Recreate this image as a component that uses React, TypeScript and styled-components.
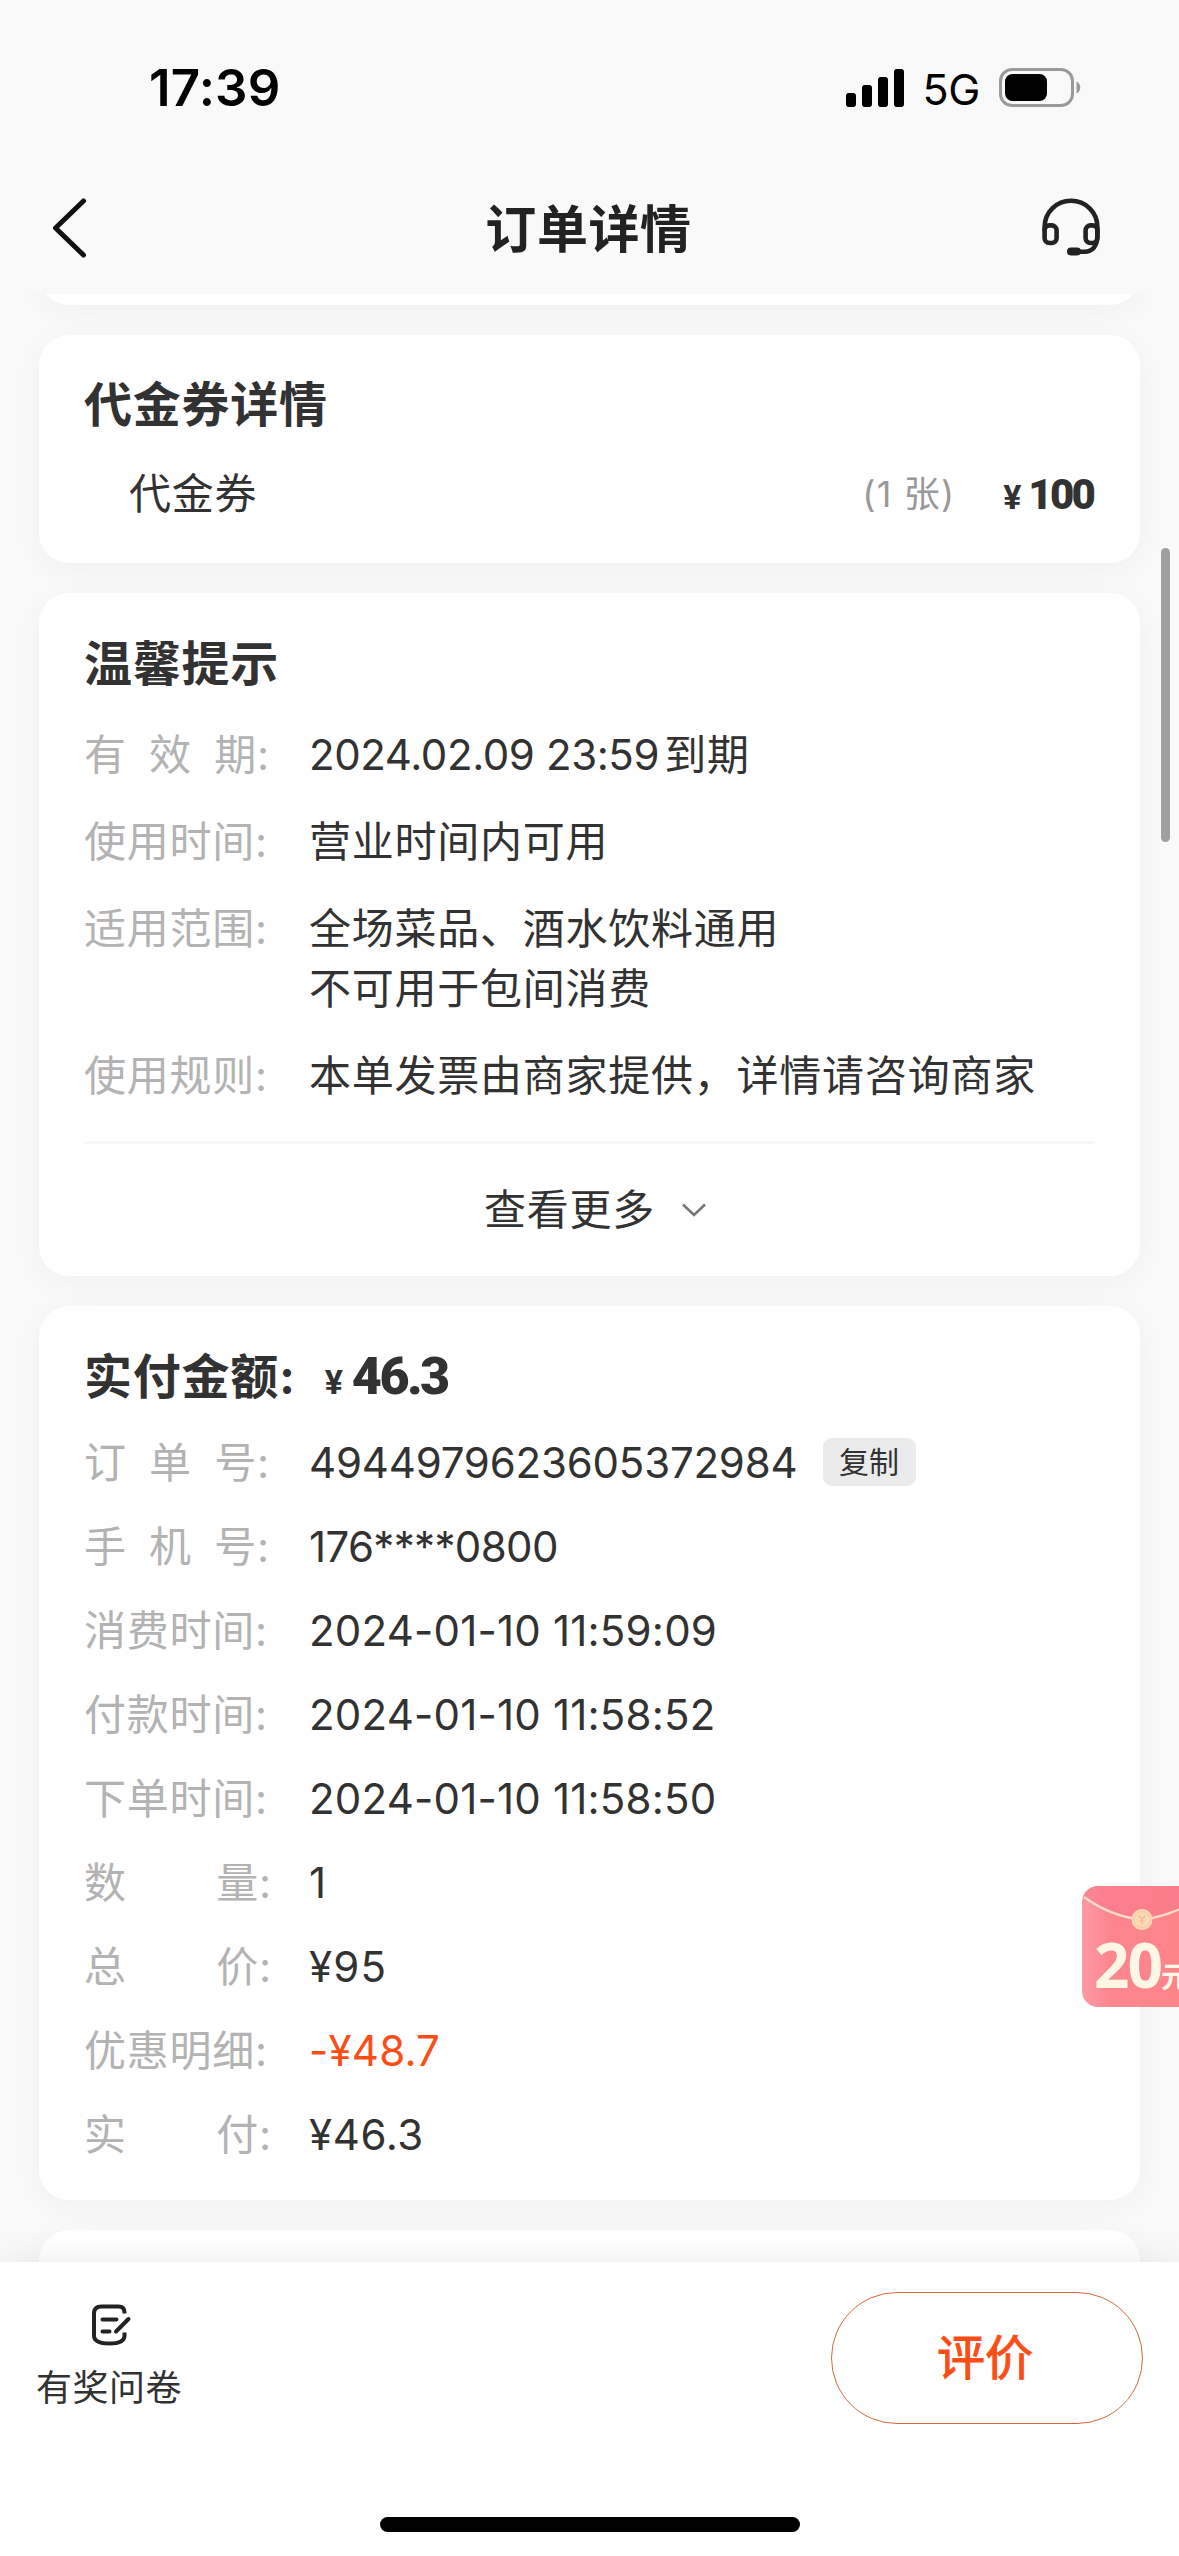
import React from "react";
import styled, { createGlobalStyle, css } from "styled-components";

const flex = (JC: string, AI: string, direction?: string) => `
display:flex;
flex-direction:${direction || "row"};
justify-content:${JC};
align-items:${AI};
`;
const TEXT = "#323232";
const LABEL = "#b3b3b3";
const ORANGE = "#fb4e16";

type Row = {
  label: string;
  value: string[];
  copy?: boolean;
  accent?: boolean;
  spacing?: number;
};

const tips: Row[] = [
  { label: "有效期", value: ["2024.02.09 23:59", "到期"], spacing: -0.4 },
  { label: "使用时间", value: ["营业时间内可用"] },
  { label: "适用范围", value: ["全场菜品、酒水饮料通用\n不可用于包间消费"] },
  { label: "使用规则", value: ["本单发票由商家提供，详情请咨询商家"] },
];

const order: Row[] = [
  { label: "订单号", value: ["4944979623605372984"], copy: true, spacing: -0.2 },
  { label: "手机号", value: ["176****0800"], spacing: -0.65 },
  { label: "消费时间", value: ["2024-01-10 11:59:09"] },
  { label: "付款时间", value: ["2024-01-10 11:58:52"] },
  { label: "下单时间", value: ["2024-01-10 11:58:50"] },
  { label: "数量", value: ["1"] },
  { label: "总价", value: ["¥95"], spacing: 1.2 },
  { label: "优惠明细", value: ["-¥48.7"], accent: true },
  { label: "实付", value: ["¥46.3"], spacing: 0.6 },
];

function Rows({ items, gap }: { items: Row[]; gap: number }) {
  return (
    <List $gap={gap}>
      {items.map((row) => (
        <Line key={row.label}>
          <Label>
            <Word $count={row.label.length}>
              {row.label.split("").map((c, i) => (
                <span key={i}>{c}</span>
              ))}
            </Word>
            :
          </Label>
          <Value $accent={row.accent}>
            {row.value.map((v) =>
              /^[\x20-\x7e¥]+$/.test(v) ? (
                <Latin
                  key={v}
                  $spacing={row.spacing}
                  $mixed={row.value.length > 1}
                >
                  {v}
                </Latin>
              ) : (
                v
              )
            )}
          </Value>
          {row.copy && <CopyButton>复制</CopyButton>}
        </Line>
      ))}
    </List>
  );
}

export default function App() {
  return (
    <Page>
      <GlobalStyle />
      <StatusBar>
        <Clock>17:39</Clock>
        <Signals>
          <svg width="58" height="38" viewBox="0 0 58 38">
            <rect x="0" y="24" width="10" height="14" rx="3" />
            <rect x="16" y="16" width="10" height="22" rx="3" />
            <rect x="32" y="8" width="10" height="30" rx="3" />
            <rect x="48" y="0" width="10" height="38" rx="3" />
          </svg>
          <Network>5G</Network>
          <svg width="82" height="40" viewBox="0 0 82 40">
            <rect
              x="1.5"
              y="1.5"
              width="72"
              height="36"
              rx="11.5"
              fill="none"
              stroke="#9a9a9a"
              strokeWidth="3"
            />
            <rect x="6" y="6" width="42" height="27" rx="7.5" />
            <path d="M77.500 13.500c5 2 5 10 0 12z" fill="#9a9a9a" />
          </svg>
        </Signals>
      </StatusBar>

      <NavBar>
        <svg width="36" height="62" viewBox="0 0 36 62">
          <path
            d="M32.5 4L4.5 31l28 27"
            fill="none"
            stroke="#111"
            strokeWidth="5"
            strokeLinecap="round"
            strokeLinejoin="round"
          />
        </svg>
        <NavTitle>订单详情</NavTitle>
        <svg width="60" height="60" viewBox="0 0 60 60">
          <g
            fill="none"
            stroke="#222"
            strokeWidth="4.6"
            strokeLinecap="round"
            strokeLinejoin="round"
          >
            <path d="M3.6 32V29C3.6 14 15.5 2.8 30 2.8S56.4 14 56.4 29v8c0 11-5 16.8-13 16.8H32" />
            <rect x="3.6" y="27.4" width="12" height="17.6" rx="5" />
            <rect x="44.6" y="27.4" width="11.8" height="17.6" rx="5" />
            <path d="M30 53.4h6" strokeWidth="8" />
          </g>
        </svg>
      </NavBar>

      <Content>
        <Card $tail="top" />

        <Card $pad="40px 45px 39px">
          <Title $bottom={29}>代金券详情</Title>
          <Voucher>
            <VoucherName>代金券</VoucherName>
            <Count>(1 张)</Count>
            <Price>
              <i>¥</i>
              <b>100</b>
            </Price>
          </Voucher>
        </Card>

        <Card $pad="41px 45px 0">
          <Title $bottom={31}>温馨提示</Title>
          <Rows items={tips} gap={27} />
          <More>
            查看更多
            <svg width="26" height="14" viewBox="0 0 26 14">
              <path
                d="M2 1.5l11 10.5 11-10.5"
                fill="none"
                stroke="#777"
                strokeWidth="2.6"
              />
            </svg>
          </More>
        </Card>

        <Card $pad="41px 45px 35px">
          <Title $bottom={26}>
            实付金额:
            <Price $large>
              <i>¥</i>
              <b>46.3</b>
            </Price>
          </Title>
          <Rows items={order} gap={24} />
        </Card>

        <Card $tail="bottom" />
      </Content>

      <Footer>
        <Actions>
          <Survey>
            <svg width="42" height="44" viewBox="0 0 42 44">
              <g
                fill="none"
                stroke="#222"
                strokeWidth="4"
                strokeLinecap="round"
                strokeLinejoin="round"
              >
                <path
                  d="M33.5 9.5V8.5c0-4-2-6-6-6h-17c-5 0-7.500 2.500-7.500 7v22c0 6 6 8 15.500 8s15-2 15-8v-3"
                  strokeLinecap="butt"
                />
                <path d="M11.500 15.500h14M11.500 27.500h7M25 27.500l12.500-12.500" />
              </g>
            </svg>
            有奖问卷
          </Survey>
          <ReviewButton>评价</ReviewButton>
        </Actions>
        <HomeBar />
      </Footer>

      <ScrollThumb />
      <Coupon>
        <svg width="97" height="60" viewBox="0 0 97 60">
          <path
            d="M0 10c18 13 38 21 59 24 15-2 27-6 38-11V0H12Q2 0 0 10z"
            fill="#f9798c"
            opacity="0.55"
          />
          <path
            d="M2 11c18 13 38 20.500 57 22.500 14-1 26-5 38-10"
            fill="none"
            stroke="#fbdcc8"
            strokeWidth="2.400"
          />
          <circle cx="60" cy="33.500" r="10.500" fill="#fbd9b6" />
          <circle
            cx="60"
            cy="33.500"
            r="8"
            fill="none"
            stroke="#f6c79f"
            strokeWidth="1"
          />
          <path
            d="M56.500 29.500l3.500 4 3.500-4M60 33.500v5M57 35h6"
            fill="none"
            stroke="#f3bb90"
            strokeWidth="1.200"
          />
        </svg>
        <CouponText>
          20<small>元</small>
        </CouponText>
      </Coupon>
    </Page>
  );
}

const GlobalStyle = createGlobalStyle`
  * {
    box-sizing: border-box;
  }
  body {
    margin: 0;
    background: #f9f9f9;
  }
  button {
    font: inherit;
    letter-spacing: inherit;
    padding: 0;
    border: none;
  }
  svg {
    display: block;
    flex-shrink: 0;
  }
`;
const Page = styled.div`
  ${flex("flex-start", "stretch", "column")}
  position: relative;
  width: 1179px;
  height: 2556px;
  overflow: hidden;
  background: #f9f9f9;
  color: ${TEXT};
  font-family: Inter, "Noto Sans CJK SC", sans-serif;
  font-size: 42px;
  line-height: 60px;
  letter-spacing: 0.76px;
  white-space: nowrap;
`;
const StatusBar = styled.div`
  ${flex("space-between", "center")}
  height: 176px;
  padding: 0 98px 0 149px;
  color: #000;
`;
const Clock = styled.div`
  font-size: 51px;
  font-weight: 600;
  letter-spacing: 0.2px;
`;
const Signals = styled.div`
  ${flex("flex-start", "center")}
`;
const Network = styled.div`
  font-size: 43px;
  letter-spacing: -0.4px;
  margin: 2px 19px 0 19px;
`;
const NavBar = styled.div`
  ${flex("space-between", "center")}
  height: 118px;
  padding: 0 78px 14px 51px;
  /* the side icons differ in width, keep the title on the page centre */
  svg:first-child {
    margin-right: 49px;
  }
`;
const NavTitle = styled.h1`
  margin: 3px 0 0;
  color: #222;
  font-size: 51px;
  font-weight: 700;
  letter-spacing: 0.6px;
`;
const Content = styled.div`
  ${flex("flex-start", "stretch", "column")}
  gap: 30px;
  height: 1968px;
  flex-shrink: 0;
  padding: 0 39px;
  overflow: hidden;
`;
const Card = styled.section<{ $pad?: string; $tail?: "top" | "bottom" }>`
  flex-shrink: 0;
  padding: ${({ $pad }) => $pad || 0};
  background: #fff;
  border-radius: 30px;
  box-shadow: 0 6px 30px rgba(0, 0, 0, 0.035);
  ${({ $tail }) =>
    $tail &&
    css`
      height: 120px;
      margin-top: ${$tail === "top" ? "-109px" : 0};
    `}
`;
const Title = styled.h2<{ $bottom: number }>`
  ${flex("flex-start", "center")}
  height: 60px;
  margin: 0 0 ${({ $bottom }) => $bottom}px;
  font-size: 48px;
  font-weight: 700;
`;
const Voucher = styled.div`
  ${flex("flex-start", "center")}
  height: 60px;
  padding: 0 2px 0 45px;
`;
const VoucherName = styled.div`
  flex: 1;
`;
const Count = styled.div`
  color: #999;
  font-size: 36px;
  letter-spacing: 1.2px;
`;
const Price = styled.div<{ $large?: boolean }>`
  ${flex("flex-start", "baseline")}
  margin: 4px 0 0 ${({ $large }) => ($large ? 29 : 48)}px;
  font-family: Roboto, sans-serif;
  font-weight: 700;
  i {
    font-size: 34px;
    font-style: normal;
    margin-right: ${({ $large }) => ($large ? 8 : 6)}px;
  }
  b {
    font-size: ${({ $large }) => ($large ? 52 : 42)}px;
    letter-spacing: ${({ $large }) => ($large ? -2.6 : -2.8)}px;
  }
`;
const List = styled.div<{ $gap: number }>`
  ${flex("flex-start", "stretch", "column")}
  gap: ${({ $gap }) => $gap}px;
`;
const Line = styled.div`
  ${flex("flex-start", "flex-start")}
  min-height: 60px;
`;
const Label = styled.div`
  ${flex("flex-start", "center")}
  width: 225px;
  flex-shrink: 0;
  color: ${LABEL};
`;
const Word = styled.div<{ $count: number }>`
  ${flex("space-between", "center")}
  width: ${({ $count }) => 179 - $count * 2}px;
`;
const Value = styled.div<{ $accent?: boolean }>`
  white-space: pre-line;
  color: ${({ $accent }) => ($accent ? ORANGE : TEXT)};
`;
const Latin = styled.span<{ $spacing?: number; $mixed?: boolean }>`
  letter-spacing: ${({ $spacing }) => $spacing ?? 0.2}px;
  margin-right: ${({ $mixed }) => ($mixed ? 5 : 0)}px;
`;
const CopyButton = styled.button`
  ${flex("center", "center")}
  width: 93px;
  height: 48px;
  margin: 5px 0 0 26px;
  padding-right: 2px;
  border-radius: 9px;
  background: #ebebeb;
  color: ${TEXT};
  font-size: 30px;
  letter-spacing: 0;
`;
const More = styled.div`
  ${flex("center", "center")}
  height: 135px;
  margin-top: 35px;
  padding-left: 12px;
  border-top: 3px solid #f7f7f7;
  svg {
    margin-left: 26px;
  }
`;
const Footer = styled.footer`
  ${flex("space-between", "center", "column")}
  position: relative;
  flex: 1;
  padding: 30px 36px 24px;
  background: #fff;
  box-shadow: 0 0 36px rgba(0, 0, 0, 0.08);
`;
const Actions = styled.div`
  ${flex("space-between", "flex-start")}
  width: 100%;
`;
const Survey = styled.div`
  ${flex("flex-start", "center", "column")}
  gap: 10px;
  padding-top: 12px;
  font-size: 36px;
  letter-spacing: 0.5px;
  svg {
    margin-left: 6px;
  }
`;
const ReviewButton = styled.button`
  ${flex("center", "center")}
  width: 312px;
  height: 132px;
  padding-right: 4px;
  border: 1.5px solid #d4683f;
  border-radius: 66px;
  background: #fff;
  color: ${ORANGE};
  font-size: 48px;
  letter-spacing: 0;
  -webkit-text-stroke: 1px ${ORANGE};
`;
const HomeBar = styled.div`
  width: 420px;
  height: 15px;
  border-radius: 8px;
  background: #000;
`;
const ScrollThumb = styled.div`
  position: absolute;
  top: 548px;
  right: 9px;
  width: 9px;
  height: 294px;
  border-radius: 5px;
  background: #9f9f9f;
`;
const Coupon = styled.div`
  position: absolute;
  top: 1886px;
  left: 1082px;
  width: 97px;
  height: 121px;
  border-radius: 16px 0 0 16px;
  overflow: hidden;
  background: linear-gradient(90deg, #fc9aa3, #fd868f 30%, #fd8489);
`;
const CouponText = styled.div`
  margin: -12px 0 0 12px;
  color: #fff6e4;
  font-family: "Open Sans", "Noto Sans CJK SC", sans-serif;
  font-size: 62px;
  font-weight: 700;
  letter-spacing: -2px;
  small {
    font-size: 29px;
  }
`;
